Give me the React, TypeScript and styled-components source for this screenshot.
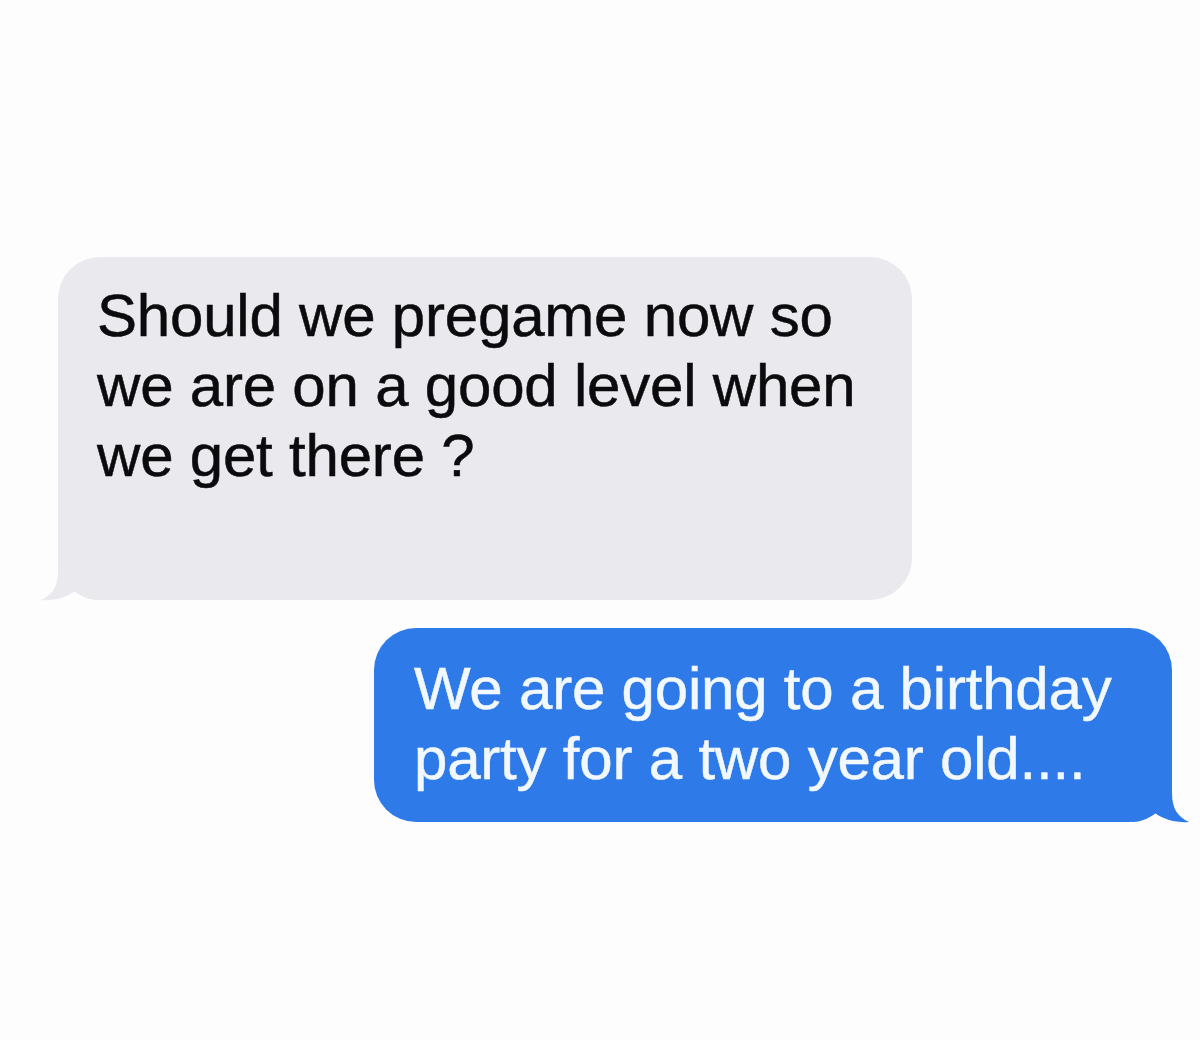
import React from "react";
import styled, { createGlobalStyle } from "styled-components";

const Global = createGlobalStyle`
  html, body { margin: 0; padding: 0; background: #fdfdfd; }
  body { font-family: "Liberation Sans", Arial, sans-serif; }
`;

const Page = styled.div`
  width: 1200px;
  height: 1040px;
  background: #fdfdfd;
  display: flex;
  flex-direction: column;
  overflow: hidden;
`;

const Bubble = styled.div<{ $sent?: boolean }>`
  position: relative;
  box-sizing: border-box;
  font-size: 60px;
  line-height: 70px;
  letter-spacing: -0.2px;
  border-radius: 42px;
  -webkit-text-stroke: 0.5px currentColor;
  background: ${(p) => (p.$sent ? "#2f7ae9" : "#e9e9ee")};
  color: ${(p) => (p.$sent ? "#f2f8ff" : "#0b0b0d")};
  ${(p) =>
    p.$sent
      ? `
    align-self: flex-end;
    width: 798px;
    margin: 28px 28px 0 0;
    padding: 26px 20px 28px 40px;
  `
      : `
    align-self: flex-start;
    width: 854px;
    margin: 257px 0 0 58px;
    padding: 24px 20px 109px 39px;
  `}
`;

const Tail = styled.svg<{ $sent?: boolean }>`
  position: absolute;
  bottom: -1px;
  width: 60px;
  height: 50px;
  ${(p) => (p.$sent ? "right: -20px; transform: scaleX(-1);" : "left: -20px;")}
`;

const Line = styled.div`
  white-space: nowrap;
`;

function BubbleTail({ sent, color }: { sent?: boolean; color: string }) {
  return (
    <Tail $sent={sent} viewBox="0 0 60 50">
      <path
        d="M20 0 L20 20 C20 36 14 44 3 49 C14 50 28 47 37 40 C44 46 52 49 60 49 L60 0 Z"
        fill={color}
      />
    </Tail>
  );
}

export default function App() {
  return (
    <>
      <Global />
      <Page>
        <Bubble>
          <Line>Should we pregame now so</Line>
          <Line>we are on a good level when</Line>
          <Line>we get there ?</Line>
          <BubbleTail color="#e9e9ee" />
        </Bubble>
        <Bubble $sent>
          <Line>We are going to a birthday</Line>
          <Line>party for a two year old....</Line>
          <BubbleTail sent color="#2f7ae9" />
        </Bubble>
      </Page>
    </>
  );
}
